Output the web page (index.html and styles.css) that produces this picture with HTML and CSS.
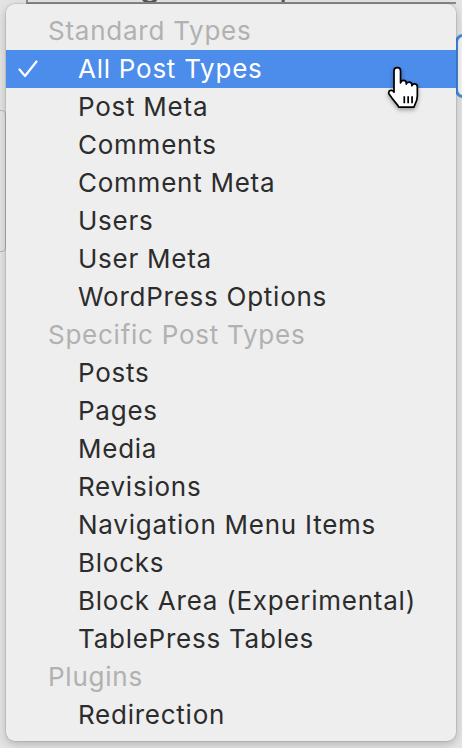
FILE: index.html
```html
<!DOCTYPE html>
<html lang="en">
  <head>
    <meta charset="UTF-8" />
    <meta name="viewport" content="width=device-width, initial-scale=1.0" />
    <title>Search Type Menu</title>
    <link rel="stylesheet" href="styles.css">
  </head>
  <body>
    <!-- page behind the open menu -->
    <div class="page">
      <div class="text-field">Enter global replacement text</div>
      <div class="focus-select"></div>
      <div class="side-box"></div>
    </div>

    <!-- open select menu -->
    <div class="menu">
      <div class="group">Standard Types</div>
      <div class="item selected">
        <svg class="check" width="20" height="18" viewBox="0 0 20 18">
          <path d="M1.5 9.5 L7 16 L18.5 1.5" fill="none" stroke="#fff" stroke-width="2.2" stroke-linecap="round" stroke-linejoin="round" />
        </svg>
        All Post Types
      </div>
      <div class="item">Post Meta</div>
      <div class="item">Comments</div>
      <div class="item">Comment Meta</div>
      <div class="item">Users</div>
      <div class="item">User Meta</div>
      <div class="item">WordPress Options</div>
      <div class="group">Specific Post Types</div>
      <div class="item">Posts</div>
      <div class="item">Pages</div>
      <div class="item">Media</div>
      <div class="item">Revisions</div>
      <div class="item">Navigation Menu Items</div>
      <div class="item">Blocks</div>
      <div class="item">Block Area (Experimental)</div>
      <div class="item">TablePress Tables</div>
      <div class="group">Plugins</div>
      <div class="item">Redirection</div>
    </div>

    <!-- mouse pointer -->
    <svg class="pointer" width="33" height="42" viewBox="0 0 21 27">
      <path d="M6.5 1 C7.7 1 8.6 1.9 8.6 3.1 V10.8 C8.8 9.9 9.6 9.3 10.5 9.3 C11.5 9.3 12.3 10.1 12.3 11.1 V11.6 C12.5 10.8 13.2 10.3 14.1 10.3 C15.1 10.3 15.9 11.1 15.9 12.1 V12.7 C16.1 12 16.8 11.5 17.6 11.5 C18.6 11.5 19.4 12.3 19.4 13.3 V19.3 C19.4 22.8 17.6 24.6 17.2 26.4 H7.4 C6.9 24.8 5 23.3 3.4 21.1 L1.3 18.2 C0.7 17.3 1 16.2 1.9 15.8 C2.8 15.4 3.7 15.8 4.3 16.6 L4.4 16.8 V3.1 C4.4 1.9 5.3 1 6.5 1 Z" fill="#fff" stroke="#000" stroke-width="1.1" stroke-linejoin="round" />
      <path d="M11 19.5 V24 M13.5 19.5 V24 M16 19.5 V24" stroke="#000" stroke-width="1.1" />
    </svg>
  </body>
</html>
```

FILE: styles.css
```css
body {
  margin: 0;
  width: 462px;
  height: 748px;
  overflow: hidden;
  background-color: #e4e4e4;
  font-family: Inter, "Noto Sans", sans-serif;
}
.page {
  position: relative;
  height: 748px;
}
.text-field {
  position: absolute;
  left: 26px;
  top: -36px;
  width: 410px;
  height: 38px;
  padding-left: 18px;
  border-left: 2px solid #8a8a8a;
  border-bottom: 2px solid #8a8a8a;
  font-size: 34px;
  line-height: 40px;
  color: #555;
  white-space: nowrap;
  overflow: hidden;
}
.focus-select {
  position: absolute;
  left: 455px;
  top: 34px;
  width: 30px;
  height: 58px;
  border: 3px solid #4a8ae0;
  border-radius: 8px;
  background-color: #f4f4f4;
}
.side-box {
  position: absolute;
  left: -20px;
  top: 110px;
  width: 24px;
  height: 140px;
  border: 1px solid #b8b8b8;
  border-radius: 4px;
}
.menu {
  position: absolute;
  left: 6px;
  top: 4px;
  width: 450px;
  padding: 8px 0 7px;
  background-color: #eeeeee;
  border-radius: 9px;
  box-shadow: 0 0 0 1px rgba(0, 0, 0, 0.08), 0 3px 10px rgba(0, 0, 0, 0.22);
}
.group,
.item {
  height: 38px;
  line-height: 38px;
  font-size: 26px;
  letter-spacing: 0.75px;
  white-space: nowrap;
}
.group {
  padding-left: 42px;
  color: #b1b1b1;
}
.item {
  position: relative;
  padding-left: 72px;
  color: #2c2c2c;
}
.item.selected {
  background-color: #4c8ceb;
  color: #ffffff;
}
.check {
  position: absolute;
  left: 12px;
  top: 10px;
}
.pointer {
  position: absolute;
  left: 387px;
  top: 66px;
  filter: drop-shadow(0 2px 2px rgba(0, 0, 0, 0.35));
}
```
